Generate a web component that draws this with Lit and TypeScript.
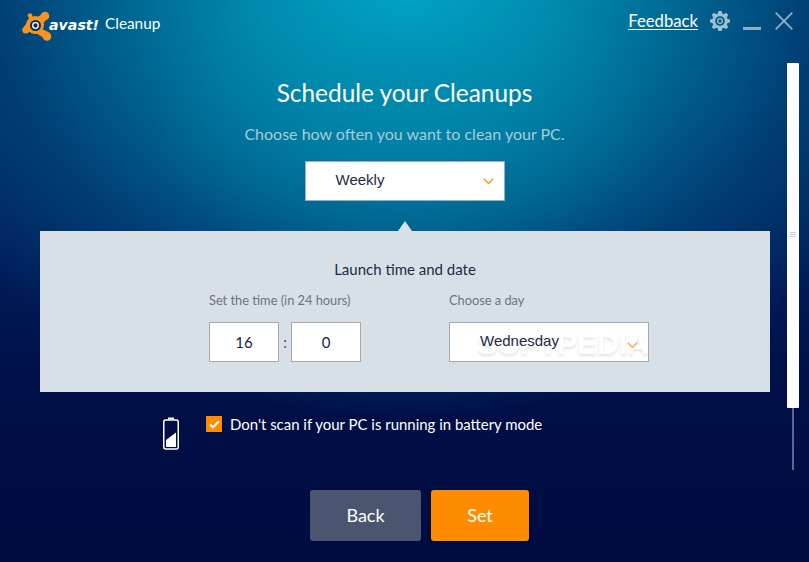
import { LitElement, html, css } from "lit";
import { customElement } from "lit/decorators.js";

const chevron = html`<svg class="chev" width="11" height="7" viewBox="0 0 11 7"><path d="M.8 .8 L5.500 5.500 L10.200 .8" fill="none" stroke="#f7941d" stroke-width="1.300"/></svg>`;

@customElement("app-root")
export class AppRoot extends LitElement {
  static styles = css`
    :host { display: block; width: 809px; height: 562px; overflow: hidden; position: relative;
      font-family: "Lato", "Liberation Sans", sans-serif; color: #fff;
      background:
        radial-gradient(ellipse 250px 170px at 405px 120px, rgba(0,135,170,.55), rgba(0,135,170,0) 100%),
        radial-gradient(ellipse 560px 430px at 405px -10px, #00a9cb 0%, #0089ad 28%, #00628f 52%, #003c72 74%, rgba(0,30,85,0) 100%),
        linear-gradient(180deg, #00356b 0%, #001a58 50%, #000f47 70%, #000c40 100%);
    }
    .header { height: 42px; display: flex; align-items: flex-start; justify-content: space-between; padding: 0 0 0 22px; }
    .brand { display: flex; align-items: center; margin-top: 11px; height: 30px; }
    .brand .name { font-family: "DejaVu Sans", sans-serif; font-style: oblique; font-weight: 700; font-size: 14.200px; margin-left: -5px; padding-bottom: 2px; }
    .brand .product { font-size: 15.300px; margin-left: 6px; padding-bottom: 6px; }
    .tools { display: flex; align-items: flex-start; }
    .feedback { color: #fff; font-size: 16.700px; margin-top: 11px; text-decoration: underline; text-underline-offset: 2px; }
    .gear { margin: 11px 0 0 12px; }
    .min { margin: 27px 0 0 13px; width: 18px; height: 3px; background: #8fb0c4; }
    .close { margin: 12px 16px 0 14px; }
    .title { font-size: 24.400px; text-align: center; margin: 37px 0 0; line-height: 28px; font-weight: 400; }
    .sub { font-size: 16px; text-align: center; color: #a9cbd8; margin: 17px 0 0; line-height: 20px; }
    .select { box-sizing: border-box; background: #fff; border: 1px solid #a3a9bd; width: 200px; height: 40px;
      display: flex; align-items: center; justify-content: space-between; padding: 0 10px 0 30px;
      font-family: "Liberation Sans", sans-serif; font-size: 15px; color: #1c2b44; }
    .select span { padding-bottom: 4px; }
    .weekly { margin: 17px auto 0; }
    .pointer { width: 0; height: 0; margin: 20px auto 0; border-left: 7px solid transparent; border-right: 7px solid transparent; border-bottom: 10px solid #d8e0e7; }
    .panel { margin: 0 39px 0 40px; height: 161px; box-sizing: border-box; background: #d8e0e7; padding-top: 29px; color: #1c2b44; }
    .panel h2 { margin: 0; text-align: center; font-size: 15px; font-weight: 400; line-height: 18px; }
    .fields { display: flex; margin: 15px 0 0 169px; }
    .col-time { width: 240px; }
    .label { font-size: 12.800px; color: #6b7480; line-height: 14px; }
    .inputs { display: flex; align-items: center; margin-top: 15px; }
    .box { box-sizing: border-box; width: 70px; height: 40px; background: #fff; border: 1px solid #a9a9a9;
      display: flex; align-items: center; justify-content: center; font-size: 15px; color: #12233f; padding-bottom: 1px; }
    .colon { width: 12px; text-align: center; color: #555; font-size: 15px; }
    .day { margin-top: 15px; position: relative; }
    .day .chev { position: relative; top: 3px; opacity: .8; }
    .mark { position: absolute; left: 27px; top: 4px; font-size: 30px; font-weight: 700; color: #fff; opacity: .9;
      text-shadow: 0 2px 3px rgba(0,0,0,.12); pointer-events: none; font-family: "Liberation Sans", sans-serif; }
    .day .txt { position: relative; z-index: 1; }
    .battery-row { display: flex; margin: 0 0 0 163px; height: 98px; }
    .batt { margin-top: 25px; }
    .check { display: flex; align-items: center; margin: 24px 0 0 27px; height: 16px; font-size: 14.950px; }
    .cb { width: 16px; height: 16px; background: #ff8c00; display: flex; align-items: center; justify-content: center; margin-right: 8px; }
    .buttons { display: flex; gap: 10px; margin-left: 310px; }
    .btn { box-sizing: border-box; width: 98px; height: 51px; border-radius: 3px; display: flex; align-items: center; justify-content: center; font-size: 18px; font-weight: 400; padding-bottom: 2px; }
    .back { width: 111px; background: #4c556f; }
    .set { background: #ff8c00; }
    .track { position: absolute; left: 792px; top: 408px; width: 2px; height: 62px; background: #5a6a8e; }
    .thumb { position: absolute; left: 787px; top: 63px; width: 12px; height: 345px; background: #fff; border-radius: 1px; }
    .thumb i { position: absolute; left: 3px; width: 6px; height: 1px; background: #ccd; }
  `;
  render() {
    return html`
      <div class="header">
        <div class="brand">
          <svg width="32" height="30" viewBox="0 0 32 30">
            <g fill="#f7941d">
              <circle cx="13" cy="14" r="9"/>
              <circle cx="8" cy="4.500" r="2.300"/>
              <path d="M6.500 5 L9.500 4 L12 8 L8 10Z"/>
              <circle cx="23" cy="5" r="4.300"/>
              <path d="M14 6 C17 6 19 4 20 2 L26 7 C23 10 21 12 20 14Z"/>
              <circle cx="25" cy="25.500" r="4.300"/>
              <path d="M18 17 C21 18 24 20 28 22 L22 28 C20 25 17 24 13 22Z"/>
              <circle cx="3.800" cy="19" r="3.600"/>
              <path d="M1.500 16 L7 10 L10 18 L5 22Z"/>
            </g>
            <circle cx="13.500" cy="14.500" r="5.500" fill="#0b2f55"/>
            <circle cx="13.500" cy="14.500" r="2.800" fill="none" stroke="#fff" stroke-width="1.300"/>
          </svg>
          <span class="name">avast!</span>
          <span class="product">Cleanup</span>
        </div>
        <div class="tools">
          <span class="feedback">Feedback</span>
          <svg class="gear" width="20" height="20" viewBox="0 0 20 20">
            <g fill="#9cc0d2">
              <path fill-rule="evenodd" d="M8.300 0h3.400l.5 2.600 1.600.7 2.200-1.500 2.300 2.300-1.500 2.200.7 1.600 2.500.5v3.200l-2.500.5-.7 1.600 1.500 2.200-2.300 2.300-2.200-1.500-1.600.7-.5 2.600H8.300l-.5-2.600-1.600-.7L4 18.200l-2.300-2.300 1.500-2.200-.7-1.600L0 11.600V8.400l2.500-.5.7-1.600L1.700 4.100 4 1.800l2.200 1.500 1.600-.7zM10 5.200a4.800 4.800 0 1 0 0 9.600a4.800 4.800 0 0 0 0-9.600z"/>
              <path fill-rule="evenodd" d="M10 7a3 3 0 1 1 0 6 3 3 0 0 1 0-6zm0 1.300a1.700 1.700 0 1 0 0 3.400 1.700 1.700 0 0 0 0-3.400z"/>
            </g>
          </svg>
          <div class="min"></div>
          <svg class="close" width="18" height="18" viewBox="0 0 18 18"><path d="M.7 .7 L17.300 17.300 M17.300 .7 L.7 17.300" stroke="#8fb0c4" stroke-width="1.800" fill="none"/></svg>
        </div>
      </div>

      <h1 class="title">Schedule your Cleanups</h1>
      <p class="sub">Choose how often you want to clean your PC.</p>
      <div class="select weekly"><span>Weekly</span>${chevron}</div>
      <div class="pointer"></div>
      <div class="panel">
        <h2>Launch time and date</h2>
        <div class="fields">
          <div class="col-time">
            <div class="label">Set the time (in 24 hours)</div>
            <div class="inputs">
              <div class="box">16</div><span class="colon">:</span><div class="box">0</div>
            </div>
          </div>
          <div>
            <div class="label">Choose a day</div>
            <div class="select day"><span class="mark">SOFTPEDIA</span><span class="txt">Wednesday</span>${chevron}</div>
          </div>
        </div>
      </div>
      <div class="battery-row">
        <svg class="batt" width="16" height="33" viewBox="0 0 16 33">
          <path d="M5 1.500h6" stroke="#fff" stroke-width="2"/>
          <rect x="0.750" y="3" width="14.500" height="29" rx="2" fill="none" stroke="#fff" stroke-width="1.500"/>
          <path d="M3 30 V23 L13 15.500 V30Z" fill="#fff"/>
        </svg>
        <div class="check">
          <span class="cb"><svg width="11" height="9" viewBox="0 0 11 9"><path d="M1 4.500 L4 7.300 L10 1.200" fill="none" stroke="#fff" stroke-width="2"/></svg></span>
          Don't scan if your PC is running in battery mode
        </div>
      </div>
      <div class="buttons">
        <div class="btn back">Back</div>
        <div class="btn set">Set</div>
      </div>
      <div class="track"></div>
      <div class="thumb"><i style="top:169px"></i><i style="top:171px"></i><i style="top:173px"></i></div>
    `;
  }
}
